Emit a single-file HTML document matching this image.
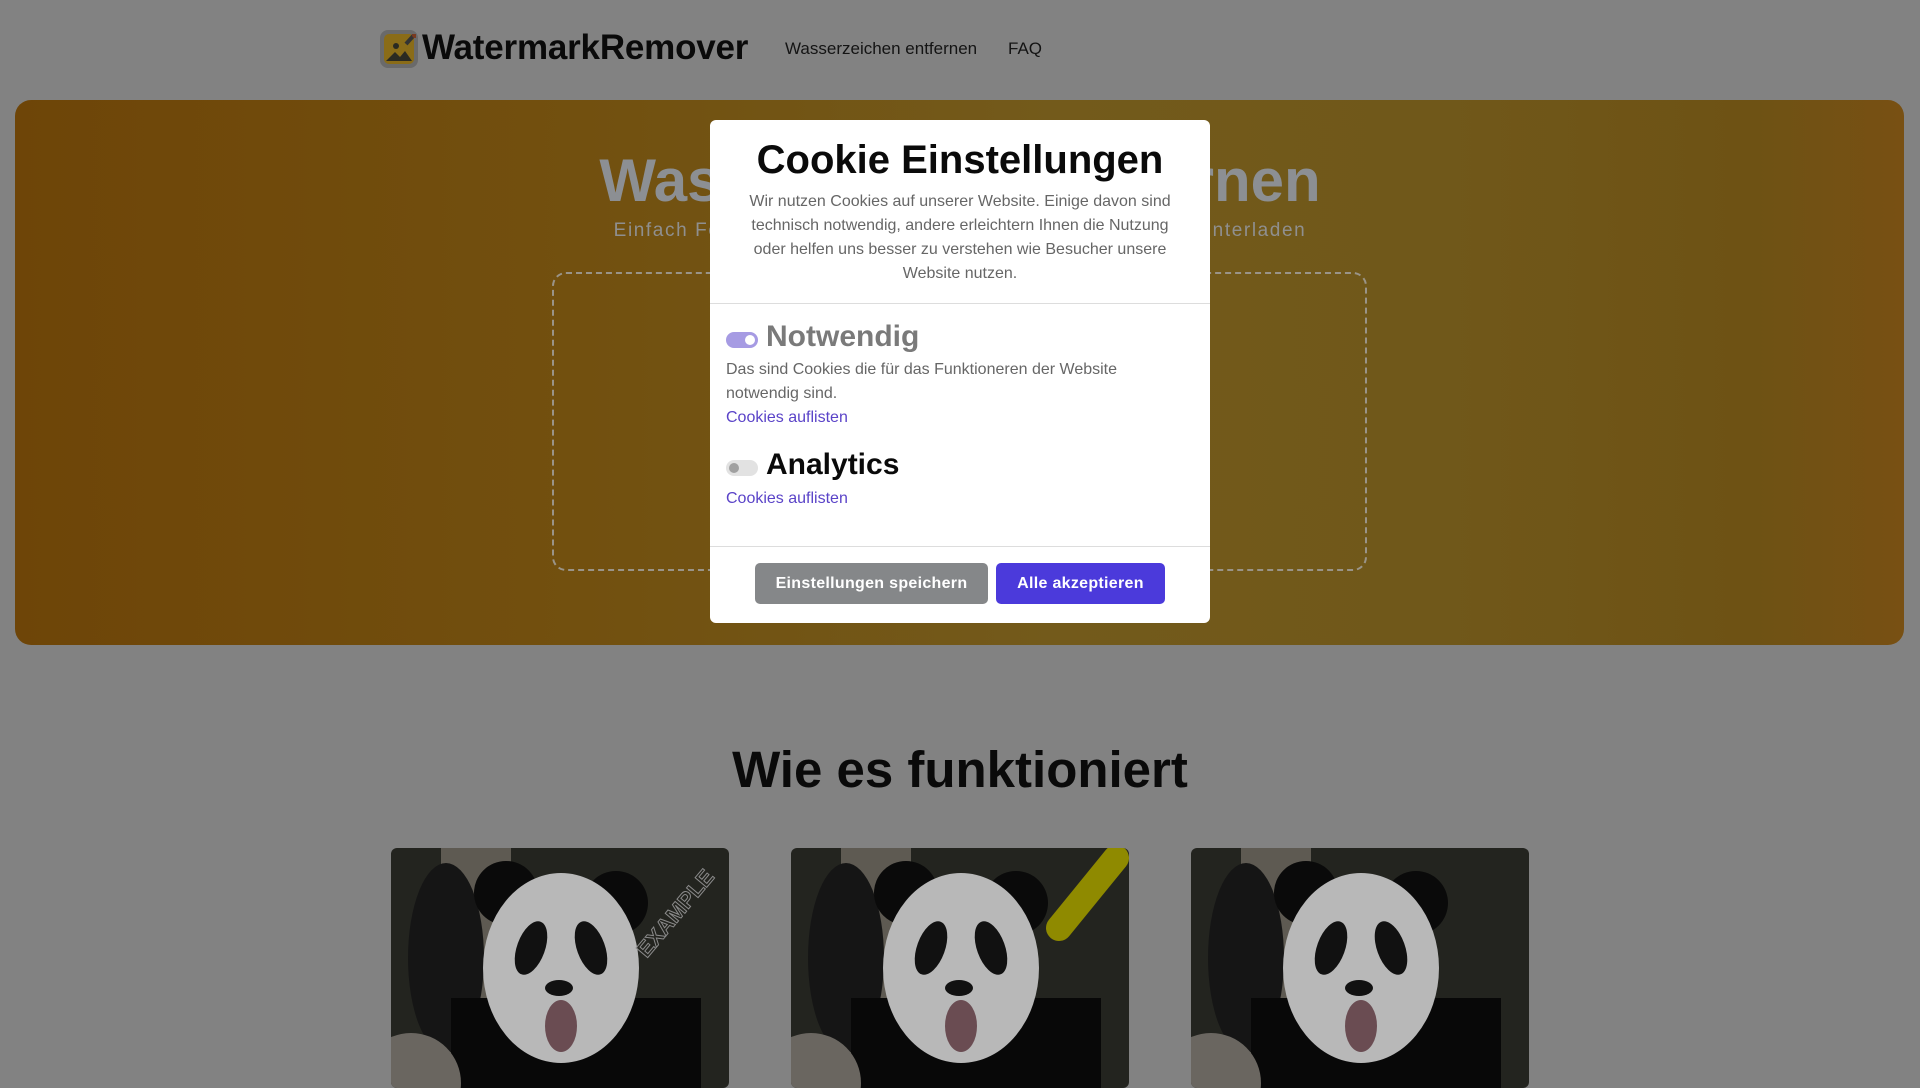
<!DOCTYPE html>
<html><head><meta charset="utf-8"><style>
*{margin:0;padding:0;box-sizing:border-box}
body{width:1920px;height:1080px;overflow:hidden;background:#828282;font-family:"Liberation Sans",sans-serif;position:relative}
.abs{position:absolute}
.hero{left:15px;top:100px;width:1889px;height:545px;border-radius:16px;background:linear-gradient(90deg,#6e4508 0%,#72500f 30%,#735a1b 55%,#70581a 75%,#6e5214 92%,#785013 100%)}
.modal{left:710px;top:120px;width:500px;height:503px;background:#fff;border-radius:6px}
.panda{top:848px;width:338px;height:240px;border-radius:6px;overflow:hidden;background:#23241f}
</style></head><body>
<!-- header -->
<div class="abs" style="left:380px;top:30px;width:38px;height:38px;border-radius:8px;background:#6a6a6a"></div>
<div class="abs" style="left:384px;top:34px;width:30px;height:30px;border-radius:5px;background:#8a6c18"></div>
<svg class="abs" style="left:384px;top:34px" width="32" height="32"><path d="M2 27 L11 18 L16 23 L21 17 L28 27Z" fill="#2a2a22"/><circle cx="12" cy="12" r="3" fill="#2a2a22"/><path d="M22 10 L31 0" stroke="#333" stroke-width="4"/><circle cx="31" cy="1" r="3" fill="#7a3a20"/></svg>
<div class="abs" style="left:422px;top:28px;font-size:35px;font-weight:bold;color:#0a0a0a;letter-spacing:-0.2px">WatermarkRemover</div>
<div class="abs" style="left:785px;top:39px;font-size:17px;color:#141414">Wasserzeichen entfernen</div>
<div class="abs" style="left:1008px;top:39px;font-size:17px;color:#141414">FAQ</div>
<!-- hero -->
<div class="abs hero"></div>
<div class="abs" style="left:0;width:1920px;top:146px;text-align:center;font-size:60px;font-weight:bold;color:#8c8f93">Wasserzeichen entfernen</div>
<div class="abs" style="left:0;width:1920px;top:220px;text-align:center;font-size:19px;letter-spacing:1.6px;color:#8f8f8f">Einfach Foto hochladen, Wasserzeichen markieren und herunterladen</div>
<div class="abs" style="left:552px;top:272px;width:815px;height:299px;border:2px dashed #9a9488;border-radius:14px"></div>
<!-- section -->
<div class="abs" style="left:0;width:1920px;top:740px;text-align:center;font-size:51px;font-weight:bold;color:#0a0a0a">Wie es funktioniert</div>
<div class="abs panda" style="left:391px">
<svg width="338" height="240"><rect x="50" y="0" width="70" height="240" fill="#5e5a52"/><ellipse cx="55" cy="110" rx="38" ry="95" fill="#151515"/><circle cx="115" cy="45" r="32" fill="#0a0a0a"/><circle cx="225" cy="55" r="32" fill="#0a0a0a"/><rect x="60" y="150" width="250" height="100" fill="#080808"/><ellipse cx="170" cy="120" rx="78" ry="95" fill="#b8b8b8"/><ellipse cx="140" cy="100" rx="14" ry="28" fill="#111" transform="rotate(20 140 100)"/><ellipse cx="200" cy="100" rx="14" ry="28" fill="#111" transform="rotate(-20 200 100)"/><ellipse cx="168" cy="140" rx="14" ry="8" fill="#111"/><ellipse cx="170" cy="178" rx="16" ry="26" fill="#6a4c52"/><ellipse cx="20" cy="235" rx="50" ry="50" fill="#6a6660"/><text x="290" y="70" font-family="Liberation Sans" font-weight="bold" font-size="22" fill="none" stroke="#8a8a8a" transform="rotate(-50 290 70)" text-anchor="middle">EXAMPLE</text></svg></div>
<div class="abs panda" style="left:791px">
<svg width="338" height="240"><rect x="50" y="0" width="70" height="240" fill="#5e5a52"/><ellipse cx="55" cy="110" rx="38" ry="95" fill="#151515"/><circle cx="115" cy="45" r="32" fill="#0a0a0a"/><circle cx="225" cy="55" r="32" fill="#0a0a0a"/><rect x="60" y="150" width="250" height="100" fill="#080808"/><ellipse cx="170" cy="120" rx="78" ry="95" fill="#b8b8b8"/><ellipse cx="140" cy="100" rx="14" ry="28" fill="#111" transform="rotate(20 140 100)"/><ellipse cx="200" cy="100" rx="14" ry="28" fill="#111" transform="rotate(-20 200 100)"/><ellipse cx="168" cy="140" rx="14" ry="8" fill="#111"/><ellipse cx="170" cy="178" rx="16" ry="26" fill="#6a4c52"/><ellipse cx="20" cy="235" rx="50" ry="50" fill="#6a6660"/><path d="M325 10 L268 80" stroke="#8f8a00" stroke-width="26" stroke-linecap="round"/></svg></div>
<div class="abs panda" style="left:1191px">
<svg width="338" height="240"><rect x="50" y="0" width="70" height="240" fill="#5e5a52"/><ellipse cx="55" cy="110" rx="38" ry="95" fill="#151515"/><circle cx="115" cy="45" r="32" fill="#0a0a0a"/><circle cx="225" cy="55" r="32" fill="#0a0a0a"/><rect x="60" y="150" width="250" height="100" fill="#080808"/><ellipse cx="170" cy="120" rx="78" ry="95" fill="#b8b8b8"/><ellipse cx="140" cy="100" rx="14" ry="28" fill="#111" transform="rotate(20 140 100)"/><ellipse cx="200" cy="100" rx="14" ry="28" fill="#111" transform="rotate(-20 200 100)"/><ellipse cx="168" cy="140" rx="14" ry="8" fill="#111"/><ellipse cx="170" cy="178" rx="16" ry="26" fill="#6a4c52"/><ellipse cx="20" cy="235" rx="50" ry="50" fill="#6a6660"/></svg></div>
<!-- modal -->
<div class="abs modal">
 <div class="abs" style="left:0;width:500px;top:18px;text-align:center;font-size:40px;font-weight:bold;color:#0a0a0a">Cookie Einstellungen</div>
 <div class="abs" style="left:28px;width:444px;top:70px;text-align:center;font-size:16px;line-height:24px;color:#666">Wir nutzen Cookies auf unserer Website. Einige davon sind technisch notwendig, andere erleichtern Ihnen die Nutzung oder helfen uns besser zu verstehen wie Besucher unsere Website nutzen.</div>
 <div class="abs" style="left:0;top:183px;width:500px;height:1px;background:#ddd"></div>
 <div class="abs" style="left:16px;top:212px;width:32px;height:16px;border-radius:8px;background:#a69be3"></div>
 <div class="abs" style="left:35px;top:215px;width:10px;height:10px;border-radius:5px;background:#fff"></div>
 <div class="abs" style="left:56px;top:200px;font-size:30px;font-weight:bold;color:#7a7a7a">Notwendig</div>
 <div class="abs" style="left:16px;top:238px;width:440px;font-size:16px;line-height:24px;color:#666">Das sind Cookies die für das Funktioneren der Website notwendig sind.</div>
 <div class="abs" style="left:16px;top:286px;font-size:16px;line-height:24px;color:#5a43c8">Cookies auflisten</div>
 <div class="abs" style="left:16px;top:340px;width:32px;height:16px;border-radius:8px;background:#e2e2e2"></div>
 <div class="abs" style="left:19px;top:343px;width:10px;height:10px;border-radius:5px;background:#a0a0a0"></div>
 <div class="abs" style="left:56px;top:328px;font-size:30px;font-weight:bold;color:#0a0a0a">Analytics</div>
 <div class="abs" style="left:16px;top:367px;font-size:16px;line-height:24px;color:#5a43c8">Cookies auflisten</div>
 <div class="abs" style="left:0;top:426px;width:500px;height:1px;background:#ddd"></div>
 <div class="abs" style="left:45px;top:443px;width:233px;height:41px;border-radius:5px;background:#858789;color:#fff;font-size:16px;font-weight:bold;text-align:center;line-height:41px;letter-spacing:0.3px">Einstellungen speichern</div>
 <div class="abs" style="left:286px;top:443px;width:169px;height:41px;border-radius:5px;background:#4b3adb;color:#fff;font-size:16px;font-weight:bold;text-align:center;line-height:41px;letter-spacing:0.3px">Alle akzeptieren</div>
</div>
</body></html>
